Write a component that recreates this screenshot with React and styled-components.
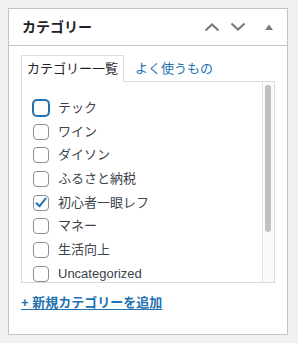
import styled, { createGlobalStyle } from 'styled-components'

const GlobalStyle = createGlobalStyle`
  html, body {
    margin: 0;
    background: #f0f0f1;
  }
  body {
    padding: 8px;
    font-family: "Liberation Sans", "Noto Sans CJK JP", sans-serif;
    color: #3c434a;
  }
`

const categories = [
  { name: 'テック', focused: true },
  { name: 'ワイン' },
  { name: 'ダイソン' },
  { name: 'ふるさと納税' },
  { name: '初心者一眼レフ', checked: true },
  { name: 'マネー' },
  { name: '生活向上' },
  { name: 'Uncategorized' },
]

export default function App() {
  return (
    <>
      <GlobalStyle />
      <Postbox>
        <Header>
          <Title>カテゴリー</Title>
          <Actions>
            <OrderButton aria-label="上へ移動">
              <svg width="16" height="10" viewBox="0 0 16 10">
                <polyline points="1.5,8.5 8,2.5 14.5,8.5" fill="none" stroke="#787c82" strokeWidth="2.2" />
              </svg>
            </OrderButton>
            <OrderButton aria-label="下へ移動">
              <svg width="16" height="10" viewBox="0 0 16 10">
                <polyline points="1.5,1.5 8,7.5 14.5,1.5" fill="none" stroke="#787c82" strokeWidth="2.2" />
              </svg>
            </OrderButton>
            <ToggleButton aria-label="パネルを切り替え">
              <svg width="8" height="6" viewBox="0 0 8 6">
                <polygon points="0,6 4,0.5 8,6" fill="#787c82" />
              </svg>
            </ToggleButton>
          </Actions>
        </Header>
        <Inside>
          <Tabs>
            <Tab active>カテゴリー一覧</Tab>
            <Tab>よく使うもの</Tab>
          </Tabs>
          <Panel>
            <Checklist>
              {categories.map((c) => (
                <Row key={c.name}>
                  <Box focused={c.focused}>
                    {c.checked && (
                      <svg width="14" height="14" viewBox="0 0 14 14">
                        <path d="M2.5 7.2 L5.6 10.2 L11.6 2.6" fill="none" stroke="#2271b1" strokeWidth="2" strokeLinecap="round" strokeLinejoin="round" />
                      </svg>
                    )}
                  </Box>
                  <Label>{c.name}</Label>
                </Row>
              ))}
            </Checklist>
            <ScrollTrack>
              <ScrollThumb />
            </ScrollTrack>
          </Panel>
          <AddLink href="#">+ 新規カテゴリーを追加</AddLink>
        </Inside>
      </Postbox>
    </>
  )
}

const Postbox = styled.div`
  width: 280px;
  height: 327px;
  box-sizing: border-box;
  background: #fff;
  border: 1px solid #c3c4c7;
`

const Header = styled.div`
  height: 36px;
  display: flex;
  align-items: center;
  justify-content: space-between;
  border-bottom: 1px solid #c3c4c7;
`

const Title = styled.h2`
  margin: 0;
  padding-left: 13px;
  font-size: 14px;
  font-weight: 700;
  line-height: 20px;
  color: #1d2327;
`

const Actions = styled.div`
  display: flex;
  height: 100%;
`

const OrderButton = styled.button`
  width: 26px;
  height: 100%;
  padding: 0;
  border: 0;
  background: none;
  display: flex;
  align-items: center;
  justify-content: center;
`

const ToggleButton = styled(OrderButton)`
  width: 36px;
  padding-bottom: 1px;
`

const Inside = styled.div`
  padding: 9px 12px 0;
`

const Tabs = styled.div`
  display: flex;
  align-items: flex-end;
  height: 27px;
`

const Tab = styled.div`
  height: 27px;
  box-sizing: border-box;
  padding: 0 5px 1px;
  margin-right: 5px;
  display: flex;
  align-items: center;
  font-size: 13px;
  line-height: 18px;
  border: 1px solid ${(p) => (p.active ? '#dcdcde' : 'transparent')};
  border-bottom: 0;
  color: ${(p) => (p.active ? '#1d2327' : '#2271b1')};
  background: ${(p) => (p.active ? '#fff' : 'transparent')};
`

const Panel = styled.div`
  height: 200px;
  display: flex;
  overflow: hidden;
  border: 1px solid #dcdcde;
  margin-top: -1px;
  background: #fff;
`

const Checklist = styled.ul`
  flex: 1;
  list-style: none;
  margin: 0;
  padding: 14px 0 0 11px;
`

const ScrollTrack = styled.div`
  width: 12px;
  flex: none;
  padding: 3px 3px 0 2px;
  box-sizing: border-box;
  background: #fafafa;
  border-left: 1px solid #e6e6e6;
`

const ScrollThumb = styled.div`
  height: 147px;
  border-radius: 4px;
  background: #c1c1c1;
`

const Row = styled.li`
  height: 23.7px;
  display: flex;
  align-items: center;
  gap: 9px;
`

const Box = styled.span`
  width: 16px;
  height: 16px;
  box-sizing: border-box;
  flex: none;
  display: flex;
  align-items: center;
  justify-content: center;
  border: 1px solid ${(p) => (p.focused ? '#2271b1' : '#8c8f94')};
  box-shadow: ${(p) => (p.focused ? '0 0 0 1px #2271b1' : 'none')};
  border-radius: 4px;
  background: #fff;
`

const Label = styled.span`
  font-size: 13px;
  line-height: 18px;
  color: #3c434a;
`

const AddLink = styled.a`
  display: inline-block;
  margin-top: 11px;
  font-size: 13px;
  font-weight: 700;
  line-height: 18px;
  color: #2271b1;
  text-decoration: underline;
  text-underline-offset: 2px;
`
